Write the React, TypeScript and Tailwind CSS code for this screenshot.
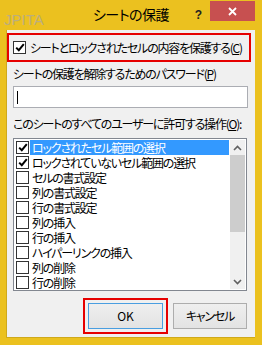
import React from 'react';

function Box({ checked }: { checked?: boolean }) {
  return (
    <span className="w-[13px] h-[13px] border border-[#333333] bg-white flex items-center justify-center shrink-0">
      {checked && (
        <svg width="10" height="9" viewBox="0 0 10 9">
          <path d="M1.2 4.6 L3.8 7.2 L8.8 1.2" stroke="#000" strokeWidth="2" fill="none" />
        </svg>
      )}
    </span>
  );
}

const rows: { label: string; checked?: boolean; selected?: boolean }[] = [
  { label: 'ロックされたセル範囲の選択', checked: true, selected: true },
  { label: 'ロックされていないセル範囲の選択', checked: true },
  { label: 'セルの書式設定' },
  { label: '列の書式設定' },
  { label: '行の書式設定' },
  { label: '列の挿入' },
  { label: '行の挿入' },
  { label: 'ハイパーリンクの挿入' },
  { label: '列の削除' },
  { label: '行の削除' },
];

export default function App() {
  return (
    <div className="w-[262px] h-[345px] bg-[#ebc11f] flex flex-col text-black text-[12px] tracking-[-1.2px] font-['Noto_Sans_CJK_JP','Noto_Sans',sans-serif] [font-feature-settings:'palt']">
      {/* title bar */}
      <div className="h-[30px] shrink-0 flex relative">
        <span className="absolute left-[4px] top-[11px] text-[15px] leading-[18px] tracking-normal text-[#bcae7c] font-['Liberation_Sans',sans-serif]">
          JPITA
        </span>
        <div className="flex-1" />
        <div className="mt-[5px] text-[14px] leading-[18px] tracking-[-0.5px]">シートの保護</div>
        <div className="flex-1 flex justify-end items-start">
          <span className="mt-[8px] mr-[8px] text-[12px] leading-[14px] tracking-normal font-bold text-[#222] font-['Liberation_Sans',sans-serif]">?</span>
          <div className="mt-[1px] mr-[7px] w-[45px] h-[20px] bg-[#c75050] flex items-center justify-center">
            <svg width="9" height="9" viewBox="0 0 9 9">
              <path d="M1 1 L8 8 M8 1 L1 8" stroke="#fff" strokeWidth="1.8" />
            </svg>
          </div>
        </div>
      </div>

      {/* panel */}
      <div className="flex-1 ml-[6px] mr-[7px] mb-[7px] bg-[#f0f0f0] border-l border-b border-[#cfa91b] flex flex-col">
        <div className="mt-[3px] w-[244px] h-[29px] border-2 border-[#e60000] flex items-center pl-[4px] gap-[4px]">
          <Box checked />
          <span className="leading-[16px] whitespace-nowrap">
            シートとロックされたセルの内容を保護する(<span className="underline">C</span>)
          </span>
        </div>

        <div className="mt-[4px] ml-[6px] h-[16px] leading-[16px] whitespace-nowrap">
          シートの保護を解除するためのパスワード(<span className="underline">P</span>)
        </div>

        <div className="mt-[4px] ml-[6px] w-[235px] h-[22px] border border-[#abadb3] bg-white pl-[3px] pt-[4px]">
          <div className="w-[1px] h-[13px] bg-black" />
        </div>

        <div className="mt-[8px] ml-[6px] h-[16px] leading-[16px] whitespace-nowrap">
          このシートのすべてのユーザーに許可する操作(<span className="underline">O</span>):
        </div>

        <div className="mt-[6px] ml-[6px] w-[234px] h-[153px] border border-[#828790] bg-white p-[1px] flex">
          <div className="flex-1 flex flex-col">
            {rows.map((r) => (
              <div key={r.label} className="h-[15px] flex items-center pl-[1px]">
                <Box checked={r.checked} />
                <span
                  className={
                    'ml-[1px] mr-[1px] flex-1 h-[15px] pl-[2px] leading-[15px] whitespace-nowrap ' +
                    (r.selected ? 'bg-[#3399ff] text-white' : '')
                  }
                >
                  {r.label}
                </span>
              </div>
            ))}
          </div>
          <div className="w-[15px] bg-[#f0f0f0] flex flex-col">
            <div className="h-[15px] flex items-center justify-center">
              <svg width="9" height="6" viewBox="0 0 9 6">
                <path d="M1 5 L4.5 1.5 L8 5" stroke="#606060" strokeWidth="1.6" fill="none" />
              </svg>
            </div>
            <div className="h-[77px] bg-[#cdcdcd]" />
            <div className="flex-1" />
            <div className="h-[15px] flex items-center justify-center">
              <svg width="9" height="6" viewBox="0 0 9 6">
                <path d="M1 1 L4.5 4.5 L8 1" stroke="#606060" strokeWidth="1.6" fill="none" />
              </svg>
            </div>
          </div>
        </div>

        <div className="mt-[7px] flex items-start">
          <div className="ml-[76px] border-2 border-[#e60000] p-[3px]">
            <div className="w-[75px] h-[26px] border border-[#4a9ee0] bg-gradient-to-b from-[#efefef] to-[#e3e3e3] flex items-center justify-center tracking-normal">
              OK
            </div>
          </div>
          <div className="ml-[5px] mt-[5px] w-[74px] h-[26px] border border-[#adadad] bg-gradient-to-b from-[#efefef] to-[#e3e3e3] flex items-center justify-center">
            キャンセル
          </div>
        </div>
      </div>
    </div>
  );
}
